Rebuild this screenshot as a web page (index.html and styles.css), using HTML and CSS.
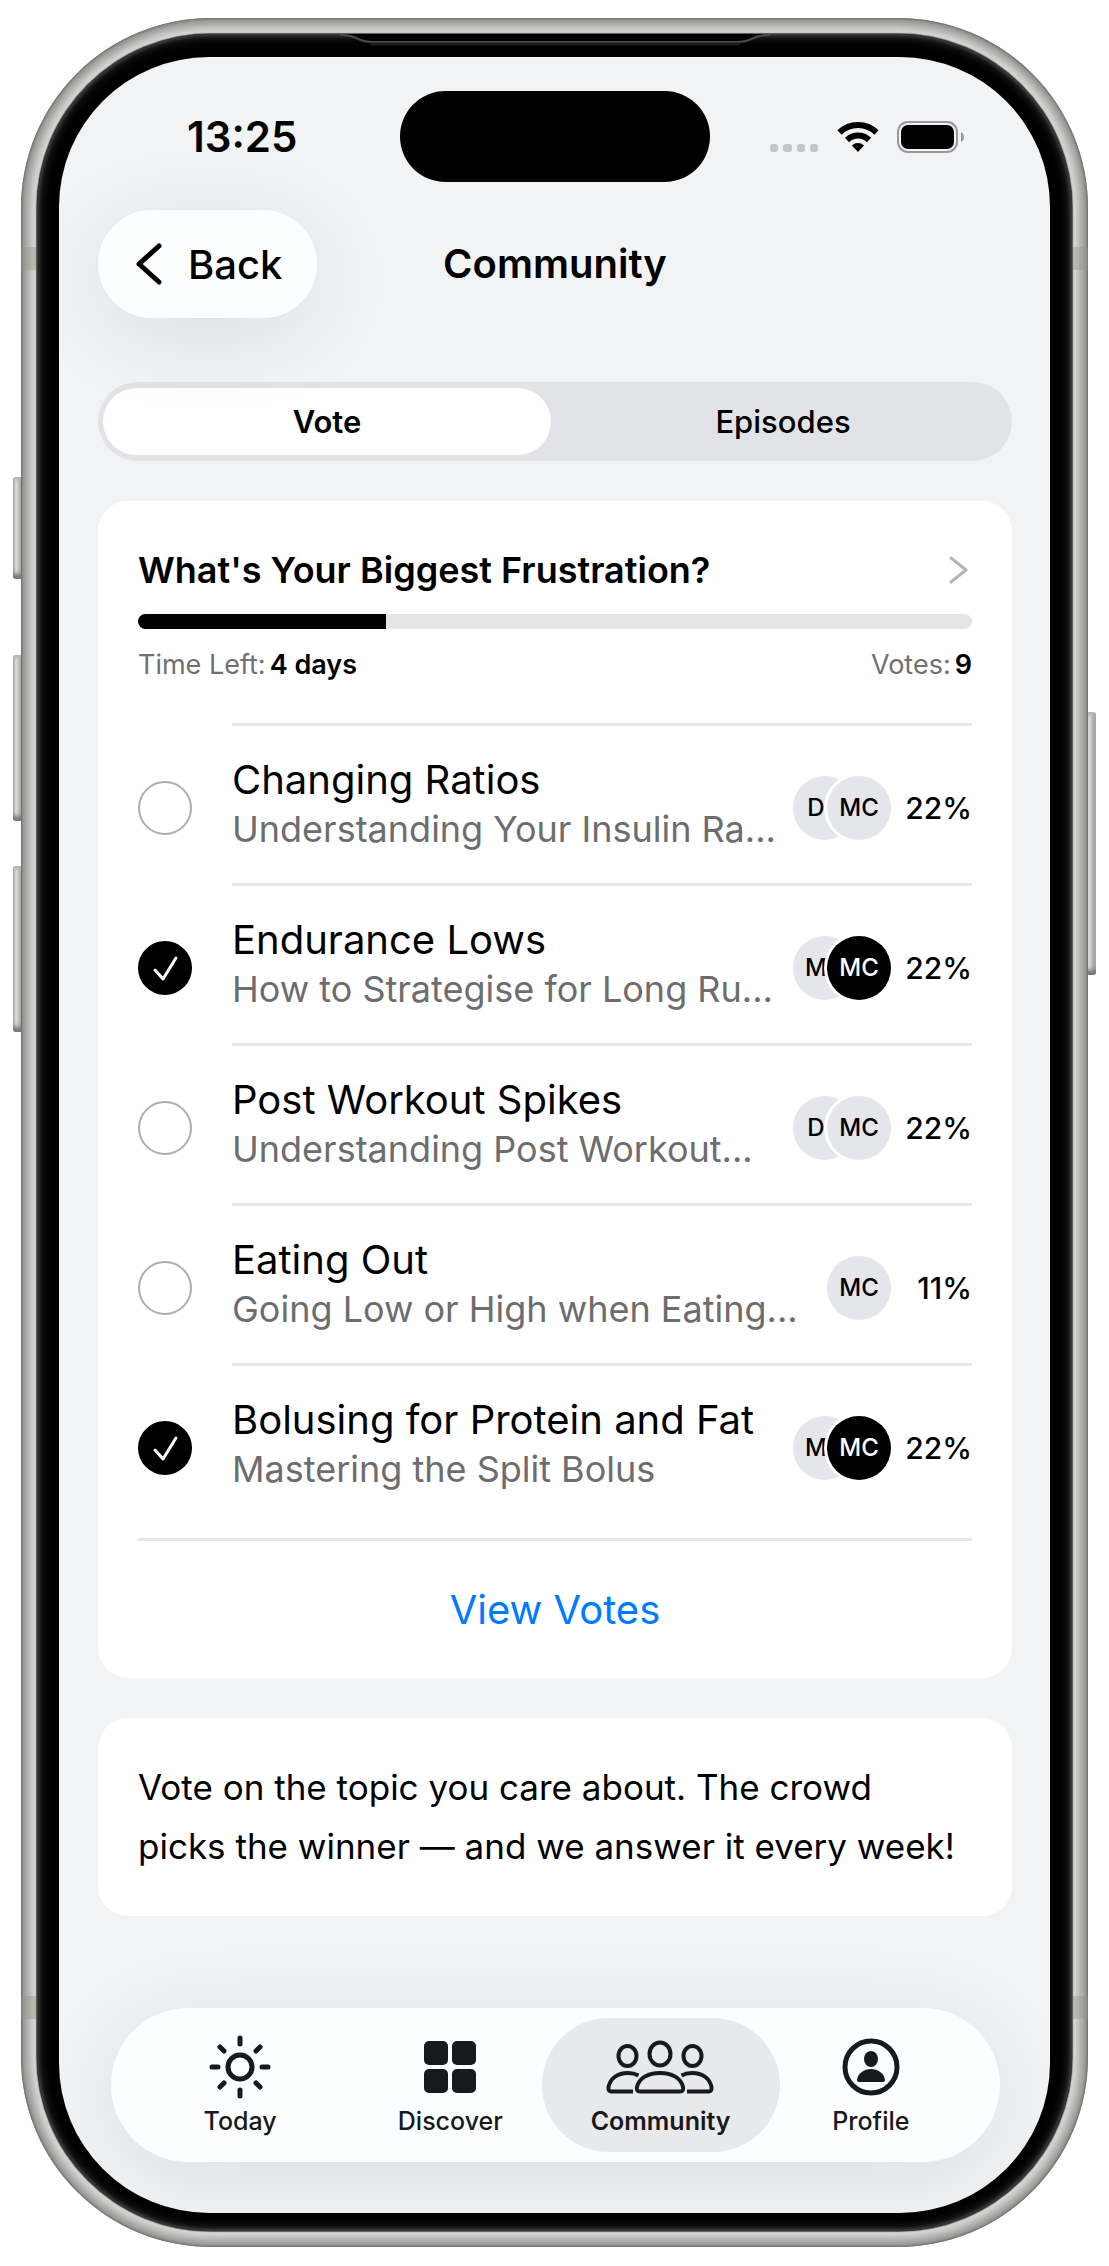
FILE: index.html
```html
<!DOCTYPE html>
<html lang="en">
<head>
<meta charset="utf-8">
<meta name="viewport" content="width=device-width, initial-scale=1">
<title>Community</title>
<link rel="stylesheet" href="styles.css">
</head>
<body>
<div class="phone">
  <span class="key key-action"></span>
  <span class="key key-up"></span>
  <span class="key key-down"></span>
  <span class="key key-power"></span>
  <div class="frame">
    <span class="band band-top"></span>
    <span class="band band-bottom"></span>
    <div class="bezel">
      <svg class="earpiece" width="430" height="14" viewBox="0 0 430 14" aria-hidden="true">
        <path d="M0 0H430C410 0 414 7 398 7H32C16 7 20 0 0 0Z" fill="#000"/>
        <path d="M0 1C20 1 16 8 32 8H398C414 8 410 1 430 1" fill="none" stroke="#4a4a4a" stroke-width="2"/>
        <path d="M30 10H400" stroke="#1c1c1c" stroke-width="3"/>
      </svg>
      <div class="screen">
        <div class="status">
          <span class="time">13:25</span>
          <span class="island"></span>
          <span class="signals">
            <svg width="49" height="31" viewBox="0 0 49 31" aria-label="No signal">
              <g fill="#c4c5c7"><rect y="23" width="8" height="8" rx="3"/><rect x="13" y="23" width="9" height="8" rx="3"/><rect x="27" y="23" width="8" height="8" rx="3"/><rect x="40" y="23" width="8" height="8" rx="3"/></g>
            </svg>
            <svg width="42" height="31" viewBox="0 0 42 31" aria-label="Wi-Fi">
              <g fill="none" stroke="#000" stroke-width="6">
                <path d="M2.500 11.500A26.500 26.500 0 0 1 39.500 11.500"/>
                <path d="M10 19A15.800 15.800 0 0 1 32 19"/>
              </g>
              <path d="M15 24.500A8.500 8.500 0 0 1 27 24.500L21 31Z"/>
            </svg>
            <svg width="68" height="32" viewBox="0 0 68 32" aria-label="Battery full">
              <rect x="1" y="1" width="59" height="30" rx="10" fill="none" stroke="#98999c" stroke-width="2"/>
              <rect x="4" y="4" width="53" height="24" rx="7"/>
              <path d="M64 11Q67 12.500 67 16T64 21Z" fill="#98999c"/>
            </svg>
          </span>
        </div>

        <header class="nav">
          <button class="back" type="button">
            <svg width="26" height="42" viewBox="0 0 26 42" aria-hidden="true"><path d="M23 3L3 21L23 39" fill="none" stroke="#000" stroke-width="5" stroke-linecap="round" stroke-linejoin="round"/></svg>
            Back
          </button>
          <h1>Community</h1>
        </header>

        <main class="content">
          <div class="segments">
            <button class="segment selected" type="button">Vote</button>
            <button class="segment" type="button">Episodes</button>
          </div>

          <section class="card poll">
            <a class="poll-title" href="#poll">
              What's Your Biggest Frustration?
              <svg width="20" height="28" viewBox="0 0 20 28" aria-hidden="true"><path d="M3 2L18 14L3 26" fill="none" stroke="#b5b5b8" stroke-width="3" stroke-linecap="round" stroke-linejoin="round"/></svg>
            </a>
            <div class="progress"><div class="progress-fill" style="width:29.700%"></div></div>
            <div class="meta">
              <span class="fact">Time Left: <b>4 days</b></span>
              <span class="fact">Votes: <b>9</b></span>
            </div>

            <ul class="options">
              <li class="option">
                <span class="check"><input type="checkbox" id="o1"></span>
                <div class="option-body">
                  <label for="o1"><span class="name">Changing Ratios</span><span class="desc">Understanding Your Insulin Ra...</span></label>
                  <span class="avatars"><span class="avatar cut">D</span><span class="avatar">MC</span></span>
                  <span class="percent">22%</span>
                </div>
              </li>
              <li class="option">
                <span class="check"><input type="checkbox" id="o2" checked><svg width="54" height="54" viewBox="0 0 54 54" aria-hidden="true"><path d="M17 29L25 38L38 17" fill="none" stroke="#fff" stroke-width="3" stroke-linecap="round" stroke-linejoin="round"/></svg></span>
                <div class="option-body">
                  <label for="o2"><span class="name">Endurance Lows</span><span class="desc">How to Strategise for Long Ru...</span></label>
                  <span class="avatars"><span class="avatar cut">M</span><span class="avatar me">MC</span></span>
                  <span class="percent">22%</span>
                </div>
              </li>
              <li class="option">
                <span class="check"><input type="checkbox" id="o3"></span>
                <div class="option-body">
                  <label for="o3"><span class="name">Post Workout Spikes</span><span class="desc">Understanding Post Workout...</span></label>
                  <span class="avatars"><span class="avatar cut">D</span><span class="avatar">MC</span></span>
                  <span class="percent">22%</span>
                </div>
              </li>
              <li class="option">
                <span class="check"><input type="checkbox" id="o4"></span>
                <div class="option-body">
                  <label for="o4"><span class="name">Eating Out</span><span class="desc">Going Low or High when Eating...</span></label>
                  <span class="avatars"><span class="avatar">MC</span></span>
                  <span class="percent">11%</span>
                </div>
              </li>
              <li class="option">
                <span class="check"><input type="checkbox" id="o5" checked><svg width="54" height="54" viewBox="0 0 54 54" aria-hidden="true"><path d="M17 29L25 38L38 17" fill="none" stroke="#fff" stroke-width="3" stroke-linecap="round" stroke-linejoin="round"/></svg></span>
                <div class="option-body">
                  <label for="o5"><span class="name">Bolusing for Protein and Fat</span><span class="desc">Mastering the Split Bolus</span></label>
                  <span class="avatars"><span class="avatar cut">M</span><span class="avatar me">MC</span></span>
                  <span class="percent">22%</span>
                </div>
              </li>
            </ul>
            <button class="view-votes" type="button">View Votes</button>
          </section>

          <section class="card note">
            <p>Vote on the topic you care about. The crowd<br>picks the winner — and we answer it every week!</p>
          </section>
        </main>

        <nav class="tabs">
          <a class="tab" href="#today">
            <svg width="62" height="64" viewBox="0 0 62 64" aria-hidden="true"><g fill="none" stroke="#18191b" stroke-width="5" stroke-linecap="round"><circle cx="31" cy="32" r="12"/><path d="M31 3V9M31 55V61M3 32H9M53 32H59M11 12L15 16M51 12L47 16M11 52L15 48M51 52L47 48"/></g></svg>
            Today
          </a>
          <a class="tab" href="#discover">
            <svg width="62" height="64" viewBox="0 0 62 64" aria-hidden="true"><g fill="#18191b"><rect x="5" y="6" width="24" height="24" rx="5"/><rect x="33" y="6" width="24" height="24" rx="5"/><rect x="5" y="34" width="24" height="24" rx="5"/><rect x="33" y="34" width="24" height="24" rx="5"/></g></svg>
            Discover
          </a>
          <a class="tab current" href="#community" aria-current="page">
            <svg width="110" height="64" viewBox="0 0 110 64" aria-hidden="true"><g fill="none" stroke="#18191b" stroke-width="4" stroke-linecap="butt" stroke-linejoin="round"><ellipse cx="21.500" cy="21" rx="9" ry="10"/><ellipse cx="86.500" cy="21" rx="9" ry="10"/><ellipse cx="54" cy="19" rx="10.500" ry="11.500"/><path d="M34 56.500Q30 56.500 31 52C33 43 42 38 54 38S75 43 77 52Q78 56.500 74 56.500Z"/><path d="M32.500 40.500Q28 38 22 38C11 38 4 44 2.500 52Q2 56.500 5 56.500H27M75.500 40.500Q80 38 86 38C97 38 104 44 105.500 52Q106 56.500 103 56.500H81"/></g></svg>
            Community
          </a>
          <a class="tab" href="#profile">
            <svg width="62" height="64" viewBox="0 0 62 64" aria-hidden="true"><circle cx="31" cy="32" r="26" fill="none" stroke="#18191b" stroke-width="5"/><g fill="#18191b"><ellipse cx="31" cy="24" rx="7" ry="8"/><path d="M19 47Q17 47 17 45C18 38 24 34 31 34S44 38 45 45Q45 47 43 47Z"/></g></svg>
            Profile
          </a>
        </nav>
      </div>
    </div>
  </div>
</div>
</body>
</html>
```
FILE: styles.css
```css
* { box-sizing: border-box; }

body {
  margin: 0;
  background: #fff;
  color: #000;
  font-family: Inter, "Liberation Sans", sans-serif;
}

button { border: 0; background: none; color: inherit; font: inherit; padding: 0; cursor: pointer; }
a { color: inherit; text-decoration: none; }
svg { display: block; flex: none; }

/* Device shell */
.phone { position: relative; padding: 18px 21px 19px; }

.frame {
  position: relative;
  padding: 16px;
  border-radius: 190px;
  background: #dededd;
  box-shadow: inset 0 0 2px 1px #6c6c69, inset 0 0 12px 7px #888885;
}

.bezel {
  position: relative;
  padding: 23px 22px 18px;
  border-radius: 174px;
  background: #000;
  box-shadow: 0 0 1px 1px #55554f, inset 0 0 3px 2px #3c3c3c, inset 0 0 12px 2px #333;
}

.earpiece { position: absolute; top: 0; left: 50%; margin-left: -215px; }

.key {
  position: absolute;
  width: 10px;
  border-radius: 3px;
  background: linear-gradient(90deg, #9a9a98, #e0e0df 30%, #a5a5a3 80%);
  box-shadow: inset 0 -9px 4px -4px #777775, inset 0 3px 3px #b5b5b3;
}
.key-action { left: 13px; top: 477px; height: 102px; }
.key-up { left: 13px; top: 655px; height: 166px; }
.key-down { left: 13px; top: 866px; height: 166px; }
.key-power { right: 13px; top: 712px; height: 263px; }

.band {
  position: absolute;
  left: 0;
  right: 0;
  height: 23px;
  background: rgba(150, 150, 138, .4);
}
.band-top { top: 229px; }
.band-bottom { bottom: 228px; }

.screen {
  display: flex;
  flex-direction: column;
  overflow: hidden;
  padding: 34px 38px 51px 39px;
  border-radius: 150px;
  background: #f2f3f5;
}

/* Status bar */
.status {
  display: grid;
  grid-template-columns: 1fr 310px 1fr;
  align-items: center;
}
.time { padding-left: 89px; font-size: 42px; line-height: 48px; font-weight: 600; }
.island { height: 91px; border-radius: 46px; background: #000; }
.signals { display: flex; justify-content: flex-end; align-items: center; gap: 18px; padding-right: 47px; }

/* Navigation bar */
.nav {
  position: relative;
  display: grid;
  grid-template-columns: 1fr auto 1fr;
  align-items: center;
  margin-top: 28px;
}
.nav h1 { margin: 0; font-size: 40px; line-height: 48px; font-weight: 600; }
.back {
  justify-self: start;
  display: flex;
  align-items: center;
  gap: 26px;
  height: 108px;
  padding: 0 35px 0 38px;
  border-radius: 54px;
  background: #fcfdff;
  box-shadow: 0 16px 90px rgba(0, 0, 0, .09);
  font-size: 40px;
  font-weight: 500;
}

.content { display: flex; flex-direction: column; gap: 40px; margin-top: 64px; }

.segments {
  display: grid;
  grid-template-columns: 1fr 1fr;
  gap: 8px;
  padding: 6px 5px;
  border-radius: 40px;
  background: #e2e3e7;
}
.segment { height: 67px; border-radius: 34px; font-size: 31px; font-weight: 500; }
.segment.selected { background: #fff; font-weight: 600; }

.card { border-radius: 30px; background: #fff; }

/* Poll */
.poll { padding: 45px 40px 0; }
.poll-title {
  display: flex;
  justify-content: space-between;
  align-items: center;
  padding-right: 4px;
  font-size: 36px;
  line-height: 48px;
  font-weight: 600;
  white-space: nowrap;
}
.progress { overflow: hidden; height: 15px; margin-top: 20px; border-radius: 8px; background: #e5e5e7; }
.progress-fill { height: 100%; background: #000; }
.meta {
  display: flex;
  justify-content: space-between;
  margin-top: 20px;
  color: #707072;
  font-size: 27px;
  line-height: 32px;
}
.fact { display: flex; gap: 4px; }
.fact b { color: #000; font-weight: 600; }

.options { margin: 42px 0 0; padding: 0 0 15px; list-style: none; }
.option { display: grid; grid-template-columns: 54px 1fr; gap: 40px; }
.check { display: grid; align-self: center; margin-top: 10px; }
.check > * { grid-area: 1 / 1; }
.check svg { pointer-events: none; }
.check input {
  appearance: none;
  width: 54px;
  height: 54px;
  margin: 0;
  border: 2px solid #acacb2;
  border-radius: 50%;
}
.check input:checked { border-color: #000; background: #000; }

.option-body {
  display: flex;
  align-items: center;
  height: 160px;
  min-width: 0;
  padding-top: 6px;
  border-top: 3px solid #eaeaee;
}
.option-body label { flex: 1; min-width: 0; padding-bottom: 8px; white-space: nowrap; }
.name, .desc { display: block; }
.name { font-size: 40px; line-height: 51px; }
.desc { color: #6d6d6f; font-size: 36px; line-height: 48px; }

.avatars { display: flex; }
.avatar {
  display: grid;
  place-items: center;
  width: 64px;
  height: 64px;
  border-radius: 50%;
  background: #e5e6eb;
  box-shadow: 0 0 0 3px #fff;
  font-size: 24px;
  font-weight: 500;
}
.avatar + .avatar { margin-left: -30px; }
.avatar.cut { padding-right: 18px; }
.avatar.me { background: #000; color: #fff; }
.percent { width: 81px; text-align: right; font-size: 30px; font-weight: 500; }

.view-votes {
  width: 100%;
  height: 140px;
  border-top: 3px solid #e6e6eb;
  color: #007aff;
  font-size: 40px;
}

.note { padding: 40px; }
.note p { margin: 0; font-size: 35px; line-height: 59px; white-space: nowrap; }

/* Tab bar */
.tabs {
  position: relative;
  display: grid;
  grid-template-columns: repeat(4, 1fr);
  margin: 92px 12px 0 13px;
  padding: 10px 24px;
  border-radius: 77px;
  background: #fcfdff;
  box-shadow: 0 16px 90px rgba(0, 0, 0, .09);
}
.tab {
  display: flex;
  flex-direction: column;
  align-items: center;
  gap: 7px;
  height: 134px;
  margin: 0 -14px;
  padding-top: 17px;
  border-radius: 67px;
  color: #18191b;
  font-size: 25px;
  line-height: 30px;
  font-weight: 500;
}
.tab.current { background: #e8e9eb; font-weight: 600; }
```
